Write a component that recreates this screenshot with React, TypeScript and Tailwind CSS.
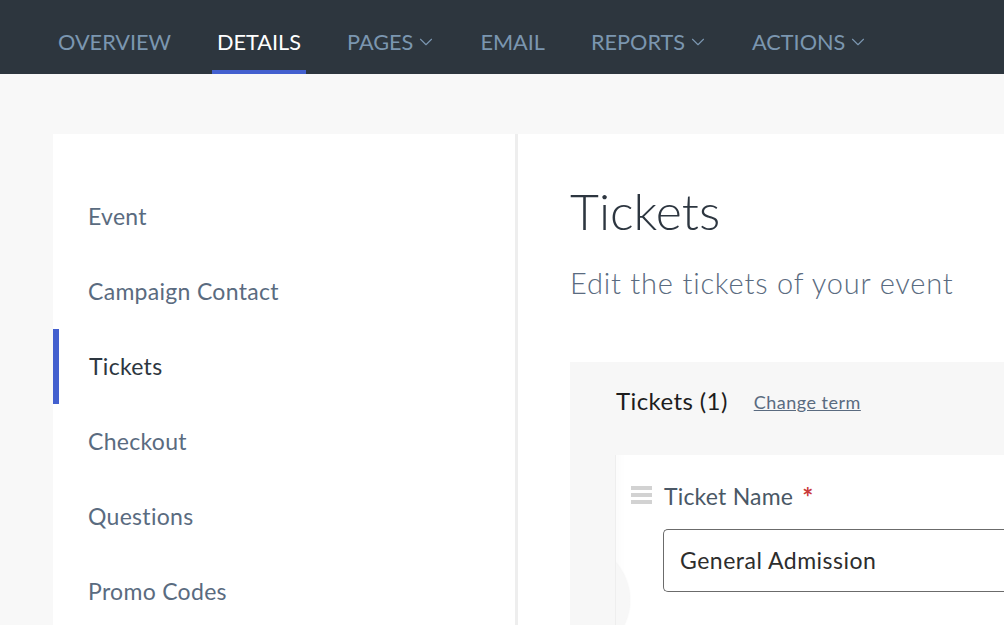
import { ChevronDown } from 'lucide-react';

const navItems = [
  { label: 'OVERVIEW' },
  { label: 'DETAILS', active: true },
  { label: 'PAGES', menu: true },
  { label: 'EMAIL' },
  { label: 'REPORTS', menu: true },
  { label: 'ACTIONS', menu: true },
];

const sideItems = ['Event', 'Campaign Contact', 'Tickets', 'Checkout', 'Questions', 'Promo Codes'];

const App = () => {
  return (
    <div className="h-[625px] w-[1004px] overflow-hidden bg-[#f8f8f8] font-['Lato',sans-serif]">
      {/* Top nav */}
      <nav className="flex h-[74px] items-stretch gap-[36px] bg-[#2d363e] pl-[53px]">
        {navItems.map((item) => (
          <div
            key={item.label}
            className={`flex items-center border-b-4 px-[5px] pt-[14px] text-[21.7px] ${
              item.active ? 'border-[#4360cf] text-white' : 'border-transparent text-[#7b96b0]'
            }`}
          >
            {item.label}
            {item.menu && <ChevronDown className="-mr-[2.5px] ml-[1.5px] h-[22px] w-[22px]" strokeWidth={1.2} />}
          </div>
        ))}
      </nav>

      <div className="flex pl-[53px] pt-[60px]">
        {/* Side menu */}
        <aside className="h-[500px] w-[465px] shrink-0 border-r-[3px] border-[#eeeeee] bg-white pt-[45px]">
          {sideItems.map((item) => (
            <div
              key={item}
              className={`flex h-[75px] items-center text-[23px] tracking-[0.3px] ${
                item === 'Tickets'
                  ? 'border-l-[6px] border-[#4360cf] pl-[30px] text-[#2d3640]'
                  : 'pl-[35px] text-[#5a6b80]'
              }`}
            >
              {item}
            </div>
          ))}
        </aside>

        {/* Content */}
        <main className="h-[500px] flex-1 bg-white pl-[52px] pt-[45px]">
          <h1 className="text-[50px] font-light leading-[64px] text-[#2d3640]">Tickets</h1>
          <p className="mt-[22px] text-[29px] font-light leading-[36px] tracking-[0.8px] text-[#5a6b80]">
            Edit the tickets of your event
          </p>

          <section className="mt-[61px] h-[300px] bg-[#f7f7f7] pl-[45px] pt-[23px]">
            <div className="flex items-center">
              <span className="ml-[1px] text-[24px] leading-[32px] tracking-[0.4px] text-[#1d1d1d]">Tickets (1)</span>
              <a className="ml-[26px] mt-[3px] text-[18px] tracking-[0.5px] text-[#5a6b80] underline">Change term</a>
            </div>

            <div className="relative mt-[38px] h-[200px] overflow-hidden border-l border-[#eeeeee] bg-white pl-[47px] pt-[26px] shadow-[inset_14px_0_10px_-10px_rgba(0,0,0,0.02)]">
              <div className="absolute left-[15px] top-[31px] flex w-[21px] flex-col gap-[3px]">
                <span className="h-[4px] bg-[#d2d2d2]" />
                <span className="h-[4px] bg-[#d2d2d2]" />
                <span className="h-[4px] bg-[#d2d2d2]" />
              </div>
              <div className="absolute left-[-98px] top-[89px] h-[112px] w-[112px] rounded-full bg-[#f7f7f7] shadow-[0_0_2px_rgba(0,0,0,0.06)]" />
              <label className="ml-[1px] block text-[23px] leading-[30px] tracking-[0.2px] text-[#4a5866]">
                Ticket Name{' '}
                <span className="ml-[3px] align-[-2px] text-[26px] font-bold leading-none text-[#c93a3a]">*</span>
              </label>
              <div className="mt-[18px] flex h-[63px] items-center rounded-l-[5px] border border-r-0 border-[#6b6b6b] bg-white pl-[16px] text-[23px] tracking-[0.5px] text-[#2d2d2d]">
                General Admission
              </div>
            </div>
          </section>
        </main>
      </div>
    </div>
  );
};

export default App;
